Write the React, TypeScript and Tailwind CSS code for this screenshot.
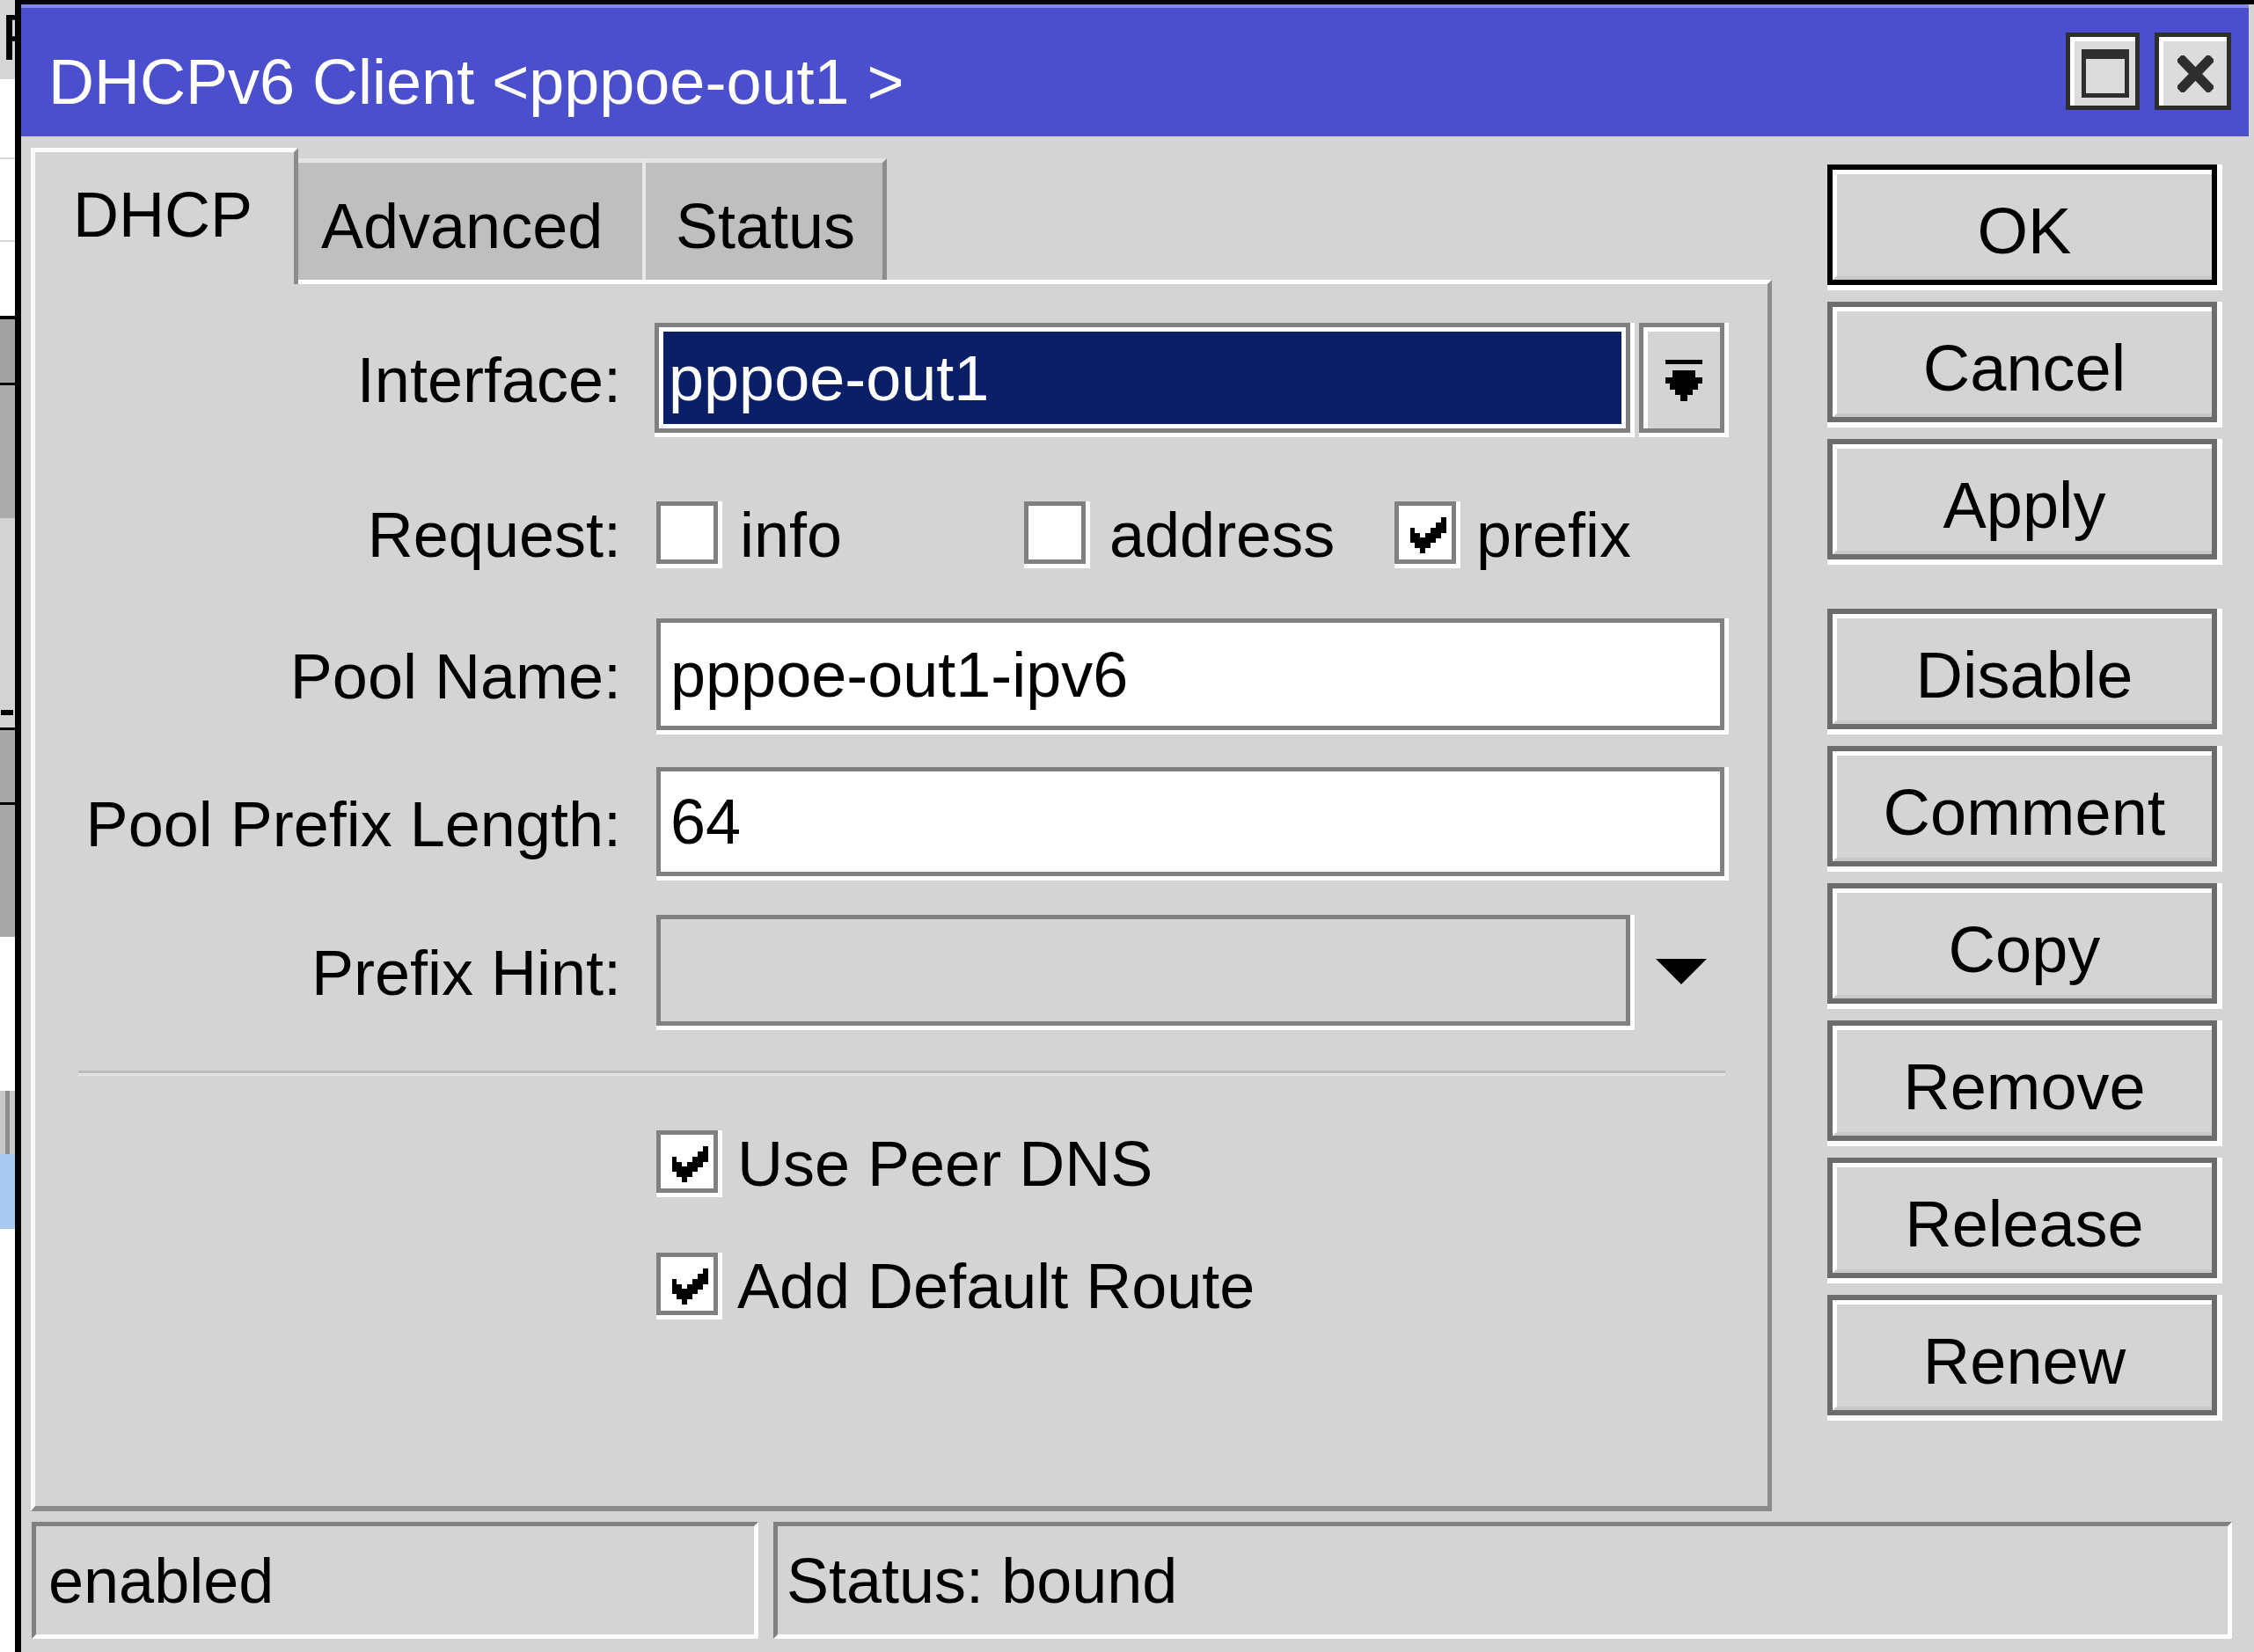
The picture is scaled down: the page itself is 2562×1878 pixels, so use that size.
import React from "react";

const CHECK_PX: [number, number][] = [
  [6, 0],
  [5, 1], [6, 1],
  [0, 2], [4, 2], [5, 2], [6, 2],
  [0, 3], [1, 3], [3, 3], [4, 3], [5, 3],
  [0, 4], [1, 4], [2, 4], [3, 4], [4, 4],
  [1, 5], [2, 5], [3, 5],
  [2, 6],
];

function CheckMark() {
  return (
    <svg viewBox="0 0 7 7" className="w-[42px] h-[41px]" shapeRendering="crispEdges">
      {CHECK_PX.map(([x, y], i) => (
        <rect key={i} x={x} y={y} width="1.02" height="1.02" fill="#000" />
      ))}
    </svg>
  );
}

function CheckBox({ checked }: { checked: boolean }) {
  return (
    <div className="w-[75px] h-[76px] shrink-0 border-b-[5px] border-r-[5px] border-white">
      <div className="w-full h-full border-[5px] border-[#808080] bg-white flex items-start pl-[12px] pt-[13px]">
        {checked ? <CheckMark /> : null}
      </div>
    </div>
  );
}

function Label({ children }: { children: React.ReactNode }) {
  return (
    <div className="w-[666px] shrink-0 text-right text-[72px] leading-none text-black whitespace-nowrap">
      {children}
    </div>
  );
}

function Btn({ label, ok, extra }: { label: string; ok?: boolean; extra?: string }) {
  return (
    <div className={`w-[449px] h-[143px] shrink-0 border-b-[6px] border-r-[6px] border-white ${extra ?? ""}`}>
      <div className={`w-full h-full border-[6px] ${ok ? "border-black" : "border-[#6c6c6c]"} bg-[#d4d4d4]`}>
        <div className="w-full h-full border-t-[5px] border-l-[5px] border-t-white border-l-white border-b-[4px] border-b-[#c8c8c8] flex items-center justify-center pt-[14px] text-[74px] leading-none text-black">
          {label}
        </div>
      </div>
    </div>
  );
}

function LeftStrip() {
  return (
    <div className="w-[17px] shrink-0 flex flex-col overflow-hidden">
      <div className="h-[90px] bg-[#d6d6d6] overflow-hidden pl-[1px] pt-[6px] text-[74px] leading-none text-black">F</div>
      <div className="h-[91px] bg-white border-b-[2px] border-[#d8d8d8]" />
      <div className="h-[94px] bg-white border-b-[2px] border-[#d8d8d8]" />
      <div className="h-[84px] bg-white" />
      <div className="h-[4px] bg-black" />
      <div className="h-[72px] bg-[#a2a2a2]" />
      <div className="h-[3px] bg-black" />
      <div className="h-[151px] bg-[#ababab]" />
      <div className="h-[181px] bg-[#d4d4d4]" />
      <div className="h-[57px] bg-[#d4d4d4] flex items-end pl-[1px]">
        <div className="w-[14px] h-[6px] bg-black mb-[14px]" />
      </div>
      <div className="h-[3px] bg-black" />
      <div className="h-[82px] bg-[#a8a8a8]" />
      <div className="h-[3px] bg-black" />
      <div className="h-[150px] bg-[#a8a8a8]" />
      <div className="h-[175px] bg-white" />
      <div className="h-[72px] bg-[#cacaca] flex pl-[6px]">
        <div className="w-[5px] h-full bg-[#8e8e8e]" />
      </div>
      <div className="h-[85px] bg-[#a8c8f0]" />
      <div className="flex-1 bg-white" />
    </div>
  );
}

function TitleBar() {
  return (
    <div className="h-[150px] shrink-0 bg-[#4c4fcd] border-t-[4px] border-[#8689e4] flex items-start pl-[31px] pr-[20px]">
      <div className="mt-[48px] text-white text-[72px] leading-none whitespace-nowrap">
        DHCPv6 Client &lt;pppoe-out1 &gt;
      </div>
      <div className="ml-auto mt-[28px] flex gap-[17px]">
        <div className="w-[84px] h-[88px] border-[5px] border-[#2e2e2e] bg-[#dcdcdc]">
          <div className="w-full h-full border-t-[5px] border-l-[5px] border-white flex items-center justify-center">
            <div className="w-[54px] h-[55px] border-[5px] border-t-[11px] border-[#2e2e2e]" />
          </div>
        </div>
        <div className="w-[87px] h-[88px] border-[5px] border-[#2e2e2e] bg-[#dcdcdc]">
          <div className="w-full h-full border-t-[5px] border-l-[5px] border-white flex items-center justify-center">
            <svg viewBox="0 0 41 42" className="w-[41px] h-[42px]">
              <path d="M6 6 L35 36 M35 6 L6 36" stroke="#2e2e2e" strokeWidth="11" strokeLinecap="square" />
            </svg>
          </div>
        </div>
      </div>
    </div>
  );
}

function Panel() {
  return (
    <div className="h-[1400px] border-t-[5px] border-l-[5px] border-r-[5px] border-b-[6px] border-t-white border-l-white border-r-[#8c8c8c] border-b-[#8c8c8c] flex flex-col">
      {/* Interface */}
      <div className="mt-[44px] h-[130px] flex items-center">
        <Label>Interface:</Label>
        <div className="ml-[38px] flex items-start">
          <div className="border-b-[5px] border-r-[5px] border-white">
            <div className="w-[1109px] h-[125px] border-[5px] border-[#808080] bg-white p-[5px]">
              <div className="w-full h-full bg-[#0b1f66] flex items-center pl-[6px] text-white text-[72px] leading-none">
                pppoe-out1
              </div>
            </div>
          </div>
          <div className="ml-[5px] border-b-[5px] border-r-[5px] border-white">
            <div className="w-[97px] h-[125px] border-[5px] border-[#808080] bg-[#d4d4d4]">
              <div className="w-full h-full border-t-[5px] border-l-[5px] border-white flex items-center justify-center">
                <svg viewBox="0 0 42 47" className="w-[42px] h-[47px]" shapeRendering="crispEdges">
                  <rect x="0" y="0" width="42" height="5" fill="#000" />
                  <rect x="8" y="12" width="26" height="8" fill="#000" />
                  <rect x="0" y="20" width="42" height="7" fill="#000" />
                  <rect x="5" y="27" width="32" height="7" fill="#000" />
                  <rect x="11" y="34" width="20" height="6" fill="#000" />
                  <rect x="17" y="40" width="8" height="7" fill="#000" />
                </svg>
              </div>
            </div>
          </div>
        </div>
      </div>

      {/* Request */}
      <div className="mt-[73px] h-[76px] flex items-center">
        <Label>Request:</Label>
        <div className="ml-[40px] flex items-center">
          <div className="w-[418px] flex items-center">
            <CheckBox checked={false} />
            <span className="ml-[20px] text-[72px] leading-none">info</span>
          </div>
          <div className="w-[421px] flex items-center">
            <CheckBox checked={false} />
            <span className="ml-[22px] text-[72px] leading-none">address</span>
          </div>
          <div className="flex items-center">
            <CheckBox checked={true} />
            <span className="ml-[18px] text-[72px] leading-none">prefix</span>
          </div>
        </div>
      </div>

      {/* Pool Name */}
      <div className="mt-[57px] h-[132px] flex items-center">
        <Label>Pool Name:</Label>
        <div className="ml-[40px] border-b-[5px] border-r-[5px] border-white">
          <div className="w-[1214px] h-[127px] border-[5px] border-[#808080] bg-white flex items-center pl-[11px] text-[72px] leading-none">
            pppoe-out1-ipv6
          </div>
        </div>
      </div>

      {/* Pool Prefix Length */}
      <div className="mt-[37px] h-[129px] flex items-center">
        <Label>Pool Prefix Length:</Label>
        <div className="ml-[40px] border-b-[5px] border-r-[5px] border-white">
          <div className="w-[1214px] h-[124px] border-[5px] border-[#808080] bg-white flex items-center pl-[11px] text-[72px] leading-none">
            64
          </div>
        </div>
      </div>

      {/* Prefix Hint */}
      <div className="mt-[39px] h-[131px] flex items-center">
        <Label>Prefix Hint:</Label>
        <div className="ml-[40px] border-b-[5px] border-r-[5px] border-white">
          <div className="w-[1107px] h-[126px] border-[5px] border-[#808080] bg-[#d4d4d4]" />
        </div>
        <svg viewBox="0 0 58 29" className="ml-[24px] w-[58px] h-[29px] mb-[2px]">
          <polygon points="0,0 58,0 29,29" fill="#000" />
        </svg>
      </div>

      {/* Separator */}
      <div className="mt-[46px] ml-[49px] w-[1872px] h-[6px] border-t-[3px] border-[#bcbcbc] border-b-[3px] border-b-[#e2e2e2]" />

      {/* Use Peer DNS */}
      <div className="mt-[62px] ml-[706px] h-[76px] flex items-center">
        <CheckBox checked={true} />
        <span className="ml-[17px] text-[72px] leading-none">Use Peer DNS</span>
      </div>

      {/* Add Default Route */}
      <div className="mt-[63px] ml-[706px] h-[76px] flex items-center">
        <CheckBox checked={true} />
        <span className="ml-[17px] text-[72px] leading-none">Add Default Route</span>
      </div>
    </div>
  );
}

function Tabs() {
  return (
    <div className="h-[150px] flex items-end">
      <div className="relative z-10 w-[304px] h-[155px] -mb-[5px] bg-[#d4d4d4] border-t-[5px] border-l-[5px] border-r-[5px] border-t-white border-l-white border-r-[#8c8c8c] pl-[43px] pt-[35px] text-[72px] leading-none">
        DHCP
      </div>
      <div className="w-[391px] h-[138px] bg-[#bfbfbf] border-t-[5px] border-[#e4e4e4] pl-[26px] pt-[36px] text-[72px] leading-none">
        Advanced
      </div>
      <div className="w-[278px] h-[138px] bg-[#bfbfbf] border-t-[5px] border-l-[4px] border-r-[5px] border-t-[#e4e4e4] border-l-[#e8e8e8] border-r-[#8c8c8c] pl-[34px] pt-[36px] text-[72px] leading-none">
        Status
      </div>
    </div>
  );
}

function StatusBar() {
  return (
    <div className="mt-[12px] ml-[1px] mr-[19px] h-[133px] flex gap-[17px]">
      <div className="w-[826px] h-full border-[5px] border-t-[#808080] border-l-[#808080] border-b-white border-r-white flex items-center pl-[14px] text-[72px] leading-none">
        enabled
      </div>
      <div className="flex-1 h-full border-[5px] border-t-[#808080] border-l-[#808080] border-b-white border-r-white flex items-center pl-[10px] text-[72px] leading-none">
        Status: bound
      </div>
    </div>
  );
}

export default function App() {
  return (
    <div className="w-[2562px] h-[1878px] overflow-hidden flex bg-white font-['Liberation_Sans',Arial,sans-serif] text-black">
      <LeftStrip />
      <div className="flex-1 flex flex-col border-l-[7px] border-t-[5px] border-black bg-[#d4d4d4] pr-[6px]">
        <TitleBar />
        <div className="flex-1 flex flex-col pl-[11px]">
          <div className="flex pt-[13px]">
            <div className="w-[1979px] shrink-0 flex flex-col">
              <Tabs />
              <Panel />
            </div>
            <div className="ml-[63px] mt-[19px] flex flex-col gap-[13px]">
              <Btn label="OK" ok />
              <Btn label="Cancel" />
              <Btn label="Apply" />
              <Btn label="Disable" extra="mt-[37px]" />
              <Btn label="Comment" />
              <Btn label="Copy" />
              <Btn label="Remove" />
              <Btn label="Release" />
              <Btn label="Renew" />
            </div>
          </div>
          <StatusBar />
        </div>
      </div>
    </div>
  );
}
